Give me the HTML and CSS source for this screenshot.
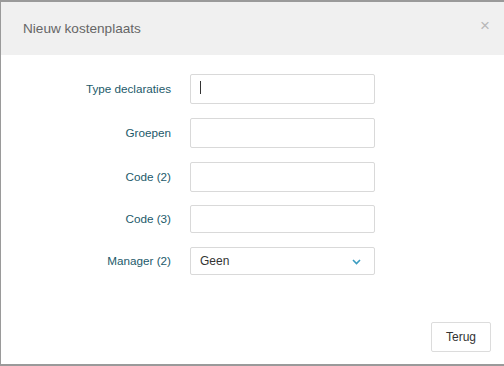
FILE: index.html
```html
<!DOCTYPE html>
<html>
<head>
<meta charset="utf-8">
<link rel="stylesheet" href="styles.css">
</head>
<body>
<div class="modal">
  <div class="modal-header">
    <span class="modal-title">Nieuw kostenplaats</span>
    <span class="close">&times;</span>
  </div>
  <div class="modal-body">
    <div class="row r30">
      <label class="lbl">Type declaraties</label>
      <div class="field"><span class="caret"></span></div>
    </div>
    <div class="row r30">
      <label class="lbl">Groepen</label>
      <div class="field"></div>
    </div>
    <div class="row r30 g13">
      <label class="lbl">Code (2)</label>
      <div class="field"></div>
    </div>
    <div class="row r28">
      <label class="lbl">Code (3)</label>
      <div class="field"></div>
    </div>
    <div class="row r28">
      <label class="lbl">Manager (2)</label>
      <div class="field select"><span>Geen</span>
        <svg class="chev" width="9" height="6" viewBox="0 0 9 6"><path d="M1 1 L4.5 4.5 L8 1" fill="none" stroke="#3a9cc0" stroke-width="1.6"/></svg>
      </div>
    </div>
  </div>
  <div class="modal-footer">
    <button class="btn">Terug</button>
  </div>
</div>
</body>
</html>
```
FILE: styles.css
```css
html, body { margin: 0; padding: 0; background: #fff; }
body { width: 504px; height: 366px; overflow: hidden; font-family: "Liberation Sans", Arial, sans-serif; }
.modal {
  box-sizing: border-box;
  width: 504px;
  height: 366px;
  border-top: 2px solid #9a9a9a;
  border-left: 1px solid #9a9a9a;
  border-bottom: 2px solid #9a9a9a;
  display: flex;
  flex-direction: column;
  background: #fff;
}
.modal-header {
  height: 53px;
  background: #f0f0f0;
  display: flex;
  align-items: center;
  justify-content: space-between;
  padding: 0 14px 0 22px;
}
.modal-title { font-size: 13.6px; color: #666; margin-top: -1px; }
.close { font-size: 17px; color: #b8b8b8; line-height: 1; margin-top: -6px; }
.modal-body {
  padding-top: 19px;
  display: flex;
  flex-direction: column;
}
.row {
  display: grid;
  grid-template-columns: 170px 185px;
  column-gap: 19px;
  align-items: center;
  margin-bottom: 14px;
}
.row.g13 { margin-bottom: 13px; }
.r30 .field { height: 30px; }
.r28 .field { height: 28px; }
.lbl {
  text-align: right;
  font-size: 11.7px;
  color: #1d5a6a;
  margin-top: -2px;
}
.field {
  box-sizing: border-box;
  border: 1px solid #d9d9d9;
  border-radius: 2px;
  background: #fff;
  position: relative;
  display: flex;
  align-items: center;
  padding: 0 9px;
}
.caret { width: 1px; height: 13px; background: #333; margin-top: -3px; }
.select { justify-content: space-between; font-size: 12px; color: #333; padding-right: 13px; }
.select span { margin-top: -1px; }
.chev { margin-top: 1px; }
.modal-footer {
  margin-top: auto;
  display: flex;
  justify-content: flex-end;
  padding: 0 13px 12px 0;
}
.btn {
  box-sizing: border-box;
  width: 60px;
  height: 30px;
  border: 1px solid #dcdcdc;
  border-radius: 2px;
  background: #fff;
  font-family: "Liberation Sans", Arial, sans-serif;
  font-size: 12px;
  color: #333;
  padding: 0;
}
```
